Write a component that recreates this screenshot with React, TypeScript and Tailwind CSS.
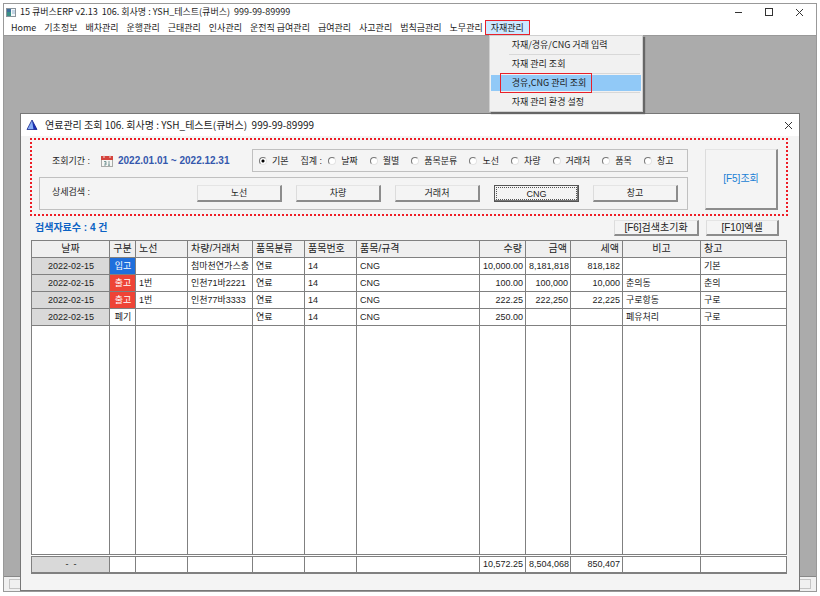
import React, { useState } from 'react'
import clsx from 'clsx'

const menus = [
  'Home',
  '기초정보',
  '배차관리',
  '운행관리',
  '근태관리',
  '인사관리',
  '운전직 급여관리',
  '급여관리',
  '사고관리',
  '범칙금관리',
  '노무관리',
]

const subMenus = [
  { label: '자재/경유/CNG 거래 입력' },
  { label: '자재 관리 조회' },
  { label: '경유,CNG 관리 조회', active: true },
  { label: '자재 관리 환경 설정' },
]

const groupOptions = [
  '날짜',
  '월별',
  '품목분류',
  '노선',
  '차량',
  '거래처',
  '품목',
  '창고',
]

const detailButtons = ['노선', '차량', '거래처', 'CNG', '창고']

const columns = [
  { label: '날짜', width: 78, align: 'text-center' },
  { label: '구분', width: 26, align: 'text-center' },
  { label: '노선', width: 52, align: 'text-left' },
  { label: '차량/거래처', width: 65, align: 'text-left' },
  { label: '품목분류', width: 52, align: 'text-left' },
  { label: '품목번호', width: 52, align: 'text-left' },
  { label: '품목/규격', width: 123, align: 'text-left' },
  { label: '수량', width: 46, align: 'text-right' },
  { label: '금액', width: 45, align: 'text-right' },
  { label: '세액', width: 52, align: 'text-right' },
  { label: '비고', width: 78, align: 'text-left' },
  { label: '창고', width: 86, align: 'text-left' },
]

const totalWidth = columns.reduce((sum, col) => sum + col.width, 0)

const rows = [
  ['2022-02-15', '입고', '', '첨마천연가스충', '연료', '14', 'CNG', '10,000.00', '8,181,818', '818,182', '', '기본'],
  ['2022-02-15', '출고', '1번', '인천71바2221', '연료', '14', 'CNG', '100.00', '100,000', '10,000', '춘의동', '춘의'],
  ['2022-02-15', '출고', '1번', '인천77바3333', '연료', '14', 'CNG', '222.25', '222,250', '22,225', '구로항동', '구로'],
  ['2022-02-15', '폐기', '', '', '연료', '14', 'CNG', '250.00', '', '', '폐유처리', '구로'],
]

const totals = ['-\u00a0\u00a0-', '', '', '', '', '', '', '10,572.25', '8,504,068', '850,407', '', '']

const kindColor: Record<string, string> = {
  입고: 'bg-[#1f6fdc] text-white',
  출고: 'bg-[#ee4436] text-white',
}

function CloseIcon() {
  return (
    <svg width="9" height="9" viewBox="0 0 9 9" fill="none" stroke="#333" strokeWidth="1">
      <path d="M1 1l7 7M8 1l-7 7" />
    </svg>
  )
}

function AppIcon() {
  return (
    <svg width="10" height="9" viewBox="0 0 10 9">
      <rect x="0.5" y="0.5" width="9" height="8" fill="#f4f8fa" stroke="#8a949c" />
      <rect x="1" y="1" width="4" height="7" fill="#3b8f86" />
      <rect x="1" y="1" width="4" height="3" fill="#3f6f9c" />
      <rect x="6" y="2" width="3" height="4" fill="#c3d5e4" />
    </svg>
  )
}

function PyramidIcon() {
  return (
    <svg width="12" height="12" viewBox="0 0 12 12">
      <path d="M6 1L1 10.5h10z" fill="#86adf6" />
      <path d="M6 1l5 9.5H7.5z" fill="#1a2fb4" />
      <path d="M6 1L1 10.5h10z" fill="none" stroke="#16268c" strokeWidth="0.8" />
    </svg>
  )
}

function CalendarIcon() {
  return (
    <svg width="12" height="12" viewBox="0 0 12 12">
      <rect x="0.5" y="1.5" width="11" height="10" fill="#f6f6f4" stroke="#a9aaa8" />
      <rect x="0" y="1" width="12" height="4" fill="#d5433c" />
      <path d="M3 0v3M9 0v3" stroke="#f3dcd8" strokeWidth="1" />
      <path d="M3 6.5h2v3.5H3M3.5 8.2H5M8 6v4.5M7 10.2h2" fill="none" stroke="#5f8587" strokeWidth="0.8" />
    </svg>
  )
}

interface PushButtonProps {
  label: string
  focused?: boolean
  className?: string
}

function PushButton({ label, focused, className }: PushButtonProps) {
  return (
    <button
      type="button"
      className={clsx(
        'flex items-center justify-center bg-[#f4f4f4] p-px',
        focused
          ? 'border border-[#555] shadow-[inset_-1px_-1px_0_#777]'
          : 'border-t border-r-2 border-b-2 border-l border-t-[#e4e4e4] border-r-[#8c8c8c] border-b-[#8c8c8c] border-l-[#dcdcdc]',
        className,
      )}
    >
      {focused ? (
        <span className="flex h-full w-full items-center justify-center border border-dotted border-[#555]">
          {label}
        </span>
      ) : (
        label
      )}
    </button>
  )
}

interface RadioProps {
  label: string
  checked: boolean
  onChange: () => void
}

function Radio({ label, checked, onChange }: RadioProps) {
  return (
    <label className="flex items-center gap-[5px] whitespace-nowrap">
      <input
        type="radio"
        name="group"
        checked={checked}
        onChange={onChange}
        className="h-2 w-2 appearance-none rounded-full border border-t-[#777] border-r-[#e4e4e4] border-b-[#e4e4e4] border-l-[#777] bg-white checked:bg-[radial-gradient(circle,#000_0_1px,#fff_2px)]"
      />
      {label}
    </label>
  )
}

function MenuBar() {
  return (
    <nav className="flex h-[15px] items-center gap-2 bg-white pl-[7px] whitespace-nowrap">
      {menus.map((menu) => (
        <button key={menu} type="button">
          {menu}
        </button>
      ))}
      <div className="relative z-20 flex h-full items-center">
        <div className="absolute -inset-x-[6px] inset-y-0 border border-[#e8202a] bg-[#cce8ff]" />
        <button type="button" className="relative">
          자재관리
        </button>
        <ul className="absolute top-full -left-0.5 w-[154px] border border-[#d0d0d0] bg-[#f1f1f1] px-px shadow-[2px_2px_1px_#666]">
          {subMenus.map((item, index) => (
            <li key={item.label}>
              {index > 0 && <hr className="mr-px ml-[18px] border-[#d8d8d8]" />}
              <button
                type="button"
                className={clsx(
                  'relative my-px flex h-4 w-full items-center pl-[21px]',
                  item.active && 'bg-[#91c9f7]',
                )}
              >
                {item.label}
                {item.active && (
                  <span className="absolute -inset-y-0.5 left-[9px] w-[92px] border border-[#e8202a]" />
                )}
              </button>
            </li>
          ))}
        </ul>
      </div>
    </nav>
  )
}

function SearchPanel() {
  const [group, setGroup] = useState('기본')

  return (
    <section className="flex gap-[17px] border-2 border-dotted border-[#ee1c25] pt-[9px] pr-2 pb-1 pl-[7px]">
      <div className="flex flex-1 flex-col gap-[5px]">
        <div className="flex h-[23px] items-center justify-between">
          <div className="flex items-center pl-[13px]">
            <span className="w-[49px]">조회기간 :</span>
            <CalendarIcon />
            <span className="pl-[5px] text-[10px] font-bold whitespace-pre text-[#3558ad]">
              2022.01.01 ~ 2022.12.31
            </span>
          </div>
          <div className="flex h-full w-[436px] items-center gap-3 border border-[#c0c0c0] pl-[6px]">
            <Radio label="기본" checked={group === '기본'} onChange={() => setGroup('기본')} />
            <div className="flex items-center gap-[6px]">
              <span>집계 :</span>
              <Radio label="날짜" checked={group === '날짜'} onChange={() => setGroup('날짜')} />
            </div>
            {groupOptions.slice(1).map((option) => (
              <Radio
                key={option}
                label={option}
                checked={group === option}
                onChange={() => setGroup(option)}
              />
            ))}
          </div>
        </div>
        <div className="flex h-[33px] items-center justify-between border border-[#c0c0c0] pr-[9px] pl-3">
          <span className="pb-1">상세검색 :</span>
          <div className="flex gap-[14px]">
            {detailButtons.map((label) => (
              <PushButton
                key={label}
                label={label}
                focused={label === 'CNG'}
                className="h-[17px] w-[85px]"
              />
            ))}
          </div>
        </div>
      </div>
      <PushButton label="[F5]조회" className="w-[73px] text-[10px] text-[#1a7fd4]" />
    </section>
  )
}

function FuelTable() {
  return (
    <table className="h-full w-full table-fixed border-collapse border border-[#808080] bg-white [&_td]:overflow-hidden [&_td]:border-x [&_td]:border-[#808080] [&_td]:pr-0.5 [&_td]:pl-[3px] [&_td]:whitespace-nowrap">
      <colgroup>
        {columns.map((col) => (
          <col key={col.label} style={{ width: `${(col.width / totalWidth) * 100}%` }} />
        ))}
      </colgroup>
      <thead>
        <tr className="h-[17px] bg-[#efefef] text-[10px]">
          {columns.map((col) => (
            <th
              key={col.label}
              className={clsx(
                'border border-[#808080] font-normal whitespace-nowrap',
                col.label === '비고' ? 'text-center' : col.align,
                col.label === '구분' ? 'px-0' : 'px-[3px]',
              )}
            >
              {col.label}
            </th>
          ))}
        </tr>
      </thead>
      <tbody>
        {rows.map((row, rowIndex) => (
          <tr key={rowIndex} className="h-[17px] border-b border-[#808080]">
            {row.map((cell, index) => (
              <td
                key={index}
                className={clsx(
                  columns[index].align,
                  index === 0 && 'bg-[#d9d9d9]',
                  index === 1 && kindColor[cell],
                )}
              >
                {cell}
              </td>
            ))}
          </tr>
        ))}
        <tr>
          {columns.map((col) => (
            <td key={col.label} />
          ))}
        </tr>
      </tbody>
      <tfoot>
        <tr className="h-[18px] border-t-[3px] border-double border-[#808080]">
          {totals.map((cell, index) => (
            <td
              key={index}
              className={clsx(
                'border-b-2 border-b-[#a8a8a8]',
                columns[index].align,
                index === 0 && 'bg-[#d9d9d9]',
              )}
            >
              {cell}
            </td>
          ))}
        </tr>
      </tfoot>
    </table>
  )
}

function FuelDialog() {
  return (
    <div className="absolute top-[78px] right-4 bottom-0 left-4 z-10 flex flex-col border border-[#777] bg-[#f4f4f4]">
      <header className="flex h-[22px] items-center bg-white pr-[6px] pl-[5px]">
        <PyramidIcon />
        <h2 className="flex-1 pl-[7px] text-[10px] whitespace-pre">
          연료관리 조회 106. 회사명 : YSH_테스트(큐버스)  999-99-89999
        </h2>
        <button type="button" aria-label="닫기">
          <CloseIcon />
        </button>
      </header>
      <div className="flex min-h-0 flex-1 flex-col pt-0.5 pr-[11px] pb-4 pl-[9px] font-['Liberation_Sans','Noto_Sans_CJK_KR',sans-serif]">
        <SearchPanel />
        <div className="flex items-center gap-[7px] pt-1 pr-[9px] pb-1 pl-[5px]">
          <p className="flex-1 text-[10px] font-bold text-[#0b62c4]">검색자료수 : 4 건</p>
          <PushButton label="[F6]검색초기화" className="h-4 w-[85px] text-[10px]" />
          <PushButton label="[F10]엑셀" className="h-4 w-[73px] text-[10px]" />
        </div>
        <div className="min-h-0 flex-1 px-px">
          <FuelTable />
        </div>
      </div>
    </div>
  )
}

export default function App() {
  return (
    <div className="h-screen bg-white p-[3px] pb-1 font-['Noto_Sans_CJK_KR',sans-serif] text-[9px] leading-3 text-[#1c1c1c]">
      <div className="flex h-full flex-col border border-[#999]">
        <header className="flex h-4 items-center bg-white pr-3 pl-0.5">
          <AppIcon />
          <h1 className="flex-1 pl-1 whitespace-pre">
            15 큐버스ERP v2.13  106. 회사명 : YSH_테스트(큐버스)  999-99-89999
          </h1>
          <div className="flex items-center gap-[22px]">
            <button type="button" aria-label="최소화">
              <svg width="8" height="8" viewBox="0 0 8 8" stroke="#333">
                <path d="M0 4.5h7" />
              </svg>
            </button>
            <button type="button" aria-label="최대화">
              <svg width="8" height="8" viewBox="0 0 8 8" fill="none" stroke="#333">
                <rect x="0.5" y="0.5" width="7" height="7" />
              </svg>
            </button>
            <button type="button" aria-label="닫기">
              <CloseIcon />
            </button>
          </div>
        </header>
        <MenuBar />
        <main className="relative flex min-h-0 flex-1 flex-col">
          <div className="flex-1 border-t border-[#999] bg-[#ababab]" />
          <div className="h-[15px] border-t border-[#888] bg-[#f0f0f0] px-[5px] py-0.5">
            <div className="h-full border border-[#c4c4c4]" />
          </div>
          <FuelDialog />
        </main>
      </div>
    </div>
  )
}
